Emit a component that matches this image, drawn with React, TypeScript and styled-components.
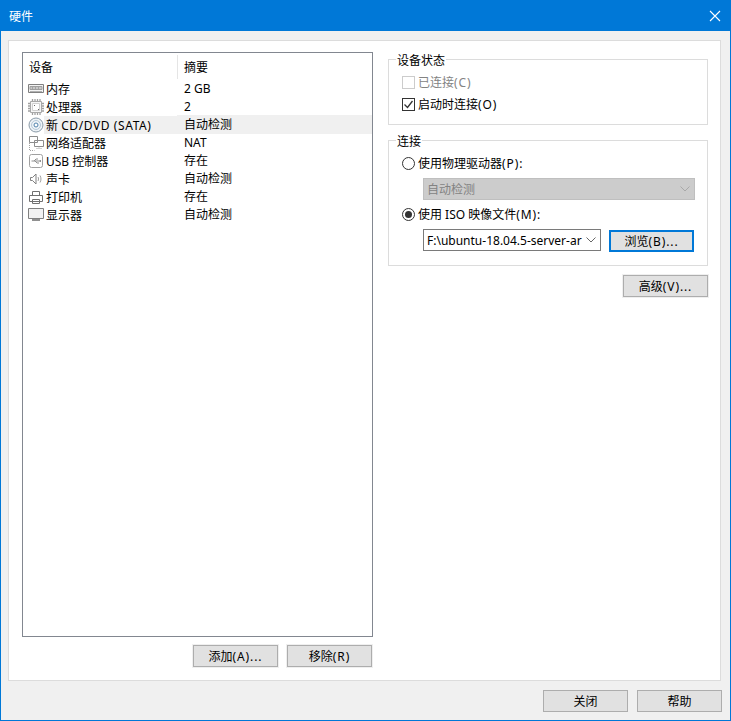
import React from "react";
import styled, { createGlobalStyle } from "styled-components";

const Global = createGlobalStyle`
  html, body { margin: 0; padding: 0; background: #f0f0f0; }
  * { box-sizing: border-box; }
  body { font-family: "Segoe UI", "Noto Sans", "Noto Sans CJK SC", sans-serif; font-size: 12px; color: #000; }
`;

const Win = styled.div`
  width: 731px; height: 721px; background: #f0f0f0;
  border: 1px solid #0078d7; border-top: 0;
  display: flex; flex-direction: column;
`;
const TitleBar = styled.div`
  height: 31px; margin: 0 -1px; background: #0078d7; color: #fff;
  display: flex; align-items: center; justify-content: space-between;
  padding: 0 10px 0 9px; font-size: 12px; flex: none;
`;
const Body = styled.div`
  flex: none; height: 641px; margin: 9px 9px 0 7px;
  background: #fff; border: 1px solid #dcdcdc;
  padding: 11px 12px 0 13px;
  display: grid; grid-template-columns: 351px 320px; column-gap: 15px;
`;
const LeftCol = styled.div`display: flex; flex-direction: column; gap: 8px;`;
const ListBox = styled.div`
  height: 585px; border: 1px solid #828790; background: #fff; padding: 1px 0 0 0;
`;
const Head = styled.div`
  display: grid; grid-template-columns: 154px 1fr; height: 25px; align-items: center;
`;
const HeadCell = styled.div<{ $sep?: boolean }>`
  height: 24px; line-height: 26px; padding-left: 6px;
  border-left: ${p => (p.$sep ? "1px solid #e5e5e5" : "0")};
`;
const Row = styled.div`
  display: grid; grid-template-columns: 154px 1fr; height: 18px; line-height: 18px;
`;
const NameCell = styled.div`display: flex; align-items: center; white-space: pre;`;
const IconBox = styled.span`
  width: 18px; height: 18px; margin-left: 4px; flex: none; display: flex; align-items: center; justify-content: center;
`;
const NameText = styled.span<{ $sel?: boolean }>`
  flex: 1; height: 18px; padding: 1px 0 0 2px; margin-left: -1px; background: ${p => (p.$sel ? "#f0f0f0" : "transparent")};
`;
const ValCell = styled.div<{ $sel?: boolean }>`
  padding: 1px 0 0 7px; background: ${p => (p.$sel ? "#f0f0f0" : "transparent")};
`;
const Wide = styled.span<{ $ls?: number }>`letter-spacing: ${p => p.$ls ?? 0.9}px;`;
const BtnRow = styled.div`display: flex; justify-content: flex-end; gap: 9px; padding-right: 1px;`;
const Btn = styled.button<{ $focus?: boolean; $lift?: boolean }>`
  width: 85px; height: 22px; padding: 0; margin: 0; font: inherit; color: #000;
  background: #e1e1e1; border-radius: 0;
  border: ${p => (p.$focus ? "2px solid #0078d7" : "1px solid #adadad")};
  box-shadow: ${p => (p.$lift ? "none" : "0 0 0 1px #efefef")};
`;
const RightCol = styled.div`display: flex; flex-direction: column;`;
const Group = styled.fieldset<{ $h: number; $top: number }>`
  margin: ${p => p.$top}px 0 0 0; padding: 4px 0 0 13px; height: ${p => p.$h}px; min-width: 0;
  border: 1px solid #dcdcdc; display: block;
`;
const Legend = styled.legend`
  margin-left: -6px; padding: 0 1px; height: 15px; line-height: 17px; font-size: 12px;
`;
const Opt = styled.div<{ $dis?: boolean }>`
  display: flex; align-items: center; gap: 3px; height: 22px; white-space: pre;
  color: ${p => (p.$dis ? "#838383" : "#000")};
`;
const CheckMark = styled.span<{ $dis?: boolean }>`
  width: 13px; height: 13px; flex: none; background: #fff; display: flex;
  border: 1px solid ${p => (p.$dis ? "#cccccc" : "#333333")};
`;
const Radio = styled.span<{ $on?: boolean }>`
  width: 13px; height: 13px; flex: none; border-radius: 50%; border: 1px solid #333; background: #fff;
  display: flex; align-items: center; justify-content: center;
  &::after { content: ""; width: 7px; height: 7px; border-radius: 50%; background: ${p => (p.$on ? "#333" : "transparent")}; }
`;
const Indent = styled.div`
  padding: 4px 0 3px 21px; display: flex; gap: 8px; align-items: flex-start;
`;
const Select = styled.div<{ $dis?: boolean; $w: number }>`
  width: ${p => p.$w}px; height: 22px; display: flex; align-items: center; justify-content: space-between;
  padding: 0 4px 0 3px; overflow: hidden; white-space: nowrap;
  background: ${p => (p.$dis ? "#cccccc" : "#fff")};
  border: 1px solid ${p => (p.$dis ? "#bfbfbf" : "#7a7a7a")};
  color: ${p => (p.$dis ? "#838383" : "#000")};
`;
const Chevron = ({ c }: { c: string }) => (
  <svg width="10" height="6" viewBox="0 0 10 6" style={{ flex: "none" }}>
    <path d="M0.5 0.5 L5 5 L9.5 0.5" fill="none" stroke={c} />
  </svg>
);
const BrowseWrap = styled.div`padding-top: 1px;`;
const AdvRow = styled.div`display: flex; justify-content: flex-end; margin-top: 9px;`;
const Footer = styled.div`
  flex: 1; display: flex; justify-content: flex-end; gap: 9px; padding: 9px 8px 0 0;
`;

const S = "#808080";
const Icon = ({ k }: { k: string }) => {
  const common = { width: 18, height: 18, viewBox: "0 0 18 18", fill: "none", stroke: S, strokeWidth: 1 } as const;
  switch (k) {
    case "mem":
      return (
        <svg {...common}>
          <path d="M1.500 4.500h15v8h-15z" fill="#f4f4f4" />
          <path d="M3 6.500h12v3H3z" fill="#c8c8c8" stroke="#a0a0a0" />
          <path d="M5 8h1M8 8h1M11 8h1" stroke="#808080" />
          <path d="M3 11.500h12" stroke="#b0b0b0" />
        </svg>
      );
    case "cpu":
      return (
        <svg {...common}>
          <path d="M3.500 3.500h11v11h-11z" stroke="#a8a8a8" fill="#f6f6f6" />
          <path d="M5.500 5.500h7v7h-7z" stroke="#d0d0d0" fill="#fff" />
          <path d="M1 5.500h2M1 8h2M1 10.500h2M1 13h2M15 5.500h2M15 8h2M15 10.500h2M15 13h2M5.500 1v2M8 1v2M10.500 1v2M13 1v2M5.500 15v2M8 15v2M10.500 15v2M13 15v2" stroke="#a0a0a0" strokeWidth="1.300" />
          <path d="M7 7h1v1H7zM11 11h1v1h-1z" fill="#666" stroke="none" />
        </svg>
      );
    case "cd":
      return (
        <svg {...common}>
          <circle cx="9" cy="9" r="7" stroke="#8a9aa8" fill="#eef3f7" />
          <circle cx="9" cy="9" r="4.500" stroke="#b5c9d9" />
          <circle cx="9" cy="9" r="2" stroke="#4d82ad" fill="#fff" />
        </svg>
      );
    case "net":
      return (
        <svg {...common}>
          <path d="M2.500 2.500h8v6h-8zM7.500 6.500h9v6h-9z" fill="#fff" stroke="#8c8c8c" />
          <path d="M12 12.500v2M9.500 14.500h5M2.500 9v7.500h5" stroke="#a0a0a0" strokeDasharray="1 1" />
        </svg>
      );
    case "usb":
      return (
        <svg {...common}>
          <rect x="2.500" y="2.500" width="13" height="13" rx="2" stroke="#a0a0a0" />
          <path d="M4.500 9h8M7 9l2-2h2M8 9l2 2h2" stroke="#909090" />
          <path d="M12.500 8h1.500v2h-1.500z" fill="#909090" stroke="none" />
        </svg>
      );
    case "snd":
      return (
        <svg {...common}>
          <path d="M3.500 7.500h2l3.500-3.500v10l-3.500-3.500h-2z" />
          <path d="M11 7c.700 1.300.700 2.700 0 4M13 5.500c1.300 2.300 1.300 4.700 0 7" stroke="#a0a0a0" />
        </svg>
      );
    case "prn":
      return (
        <svg {...common}>
          <path d="M5.500 7.500v-4h7v4M2.500 7.500h13v6h-13zM5.500 11.500h7v4h-7z" fill="#fff" stroke="#707070" />
        </svg>
      );
    default:
      return (
        <svg {...common}>
          <path d="M1.500 2.500h15v10h-15z" stroke="#808080" fill="#f2f2f2" />
          <path d="M5 14h8" stroke="#909090" strokeWidth="2" />
        </svg>
      );
  }
};

const rows: { k: string; n: React.ReactNode; v: string; sel?: boolean }[] = [
  { k: "mem", n: "内存", v: "2 GB" },
  { k: "cpu", n: "处理器", v: "2" },
  { k: "cd", n: <>新 <Wide $ls={0.6}>CD/DVD (SATA)</Wide></>, v: "自动检测", sel: true },
  { k: "net", n: "网络适配器", v: "NAT" },
  { k: "usb", n: "USB 控制器", v: "存在" },
  { k: "snd", n: "声卡", v: "自动检测" },
  { k: "prn", n: "打印机", v: "存在" },
  { k: "mon", n: "显示器", v: "自动检测" },
];

export default function App() {
  return (
    <>
      <Global />
      <Win>
        <TitleBar>
          <span>硬件</span>
          <svg width="12" height="12" viewBox="0 0 12 12">
            <path d="M1 1 L11 11 M11 1 L1 11" stroke="#fff" strokeWidth="1.100" />
          </svg>
        </TitleBar>
        <Body>
          <LeftCol>
            <ListBox>
              <Head>
                <HeadCell>设备</HeadCell>
                <HeadCell $sep>摘要</HeadCell>
              </Head>
              {rows.map(r => (
                <Row key={r.k}>
                  <NameCell>
                    <IconBox><Icon k={r.k} /></IconBox>
                    <NameText $sel={r.sel}>{r.n}</NameText>
                  </NameCell>
                  <ValCell $sel={r.sel}>{r.v}</ValCell>
                </Row>
              ))}
            </ListBox>
            <BtnRow>
              <Btn>添加<Wide>(A)...</Wide></Btn>
              <Btn>移除<Wide>(R)</Wide></Btn>
            </BtnRow>
          </LeftCol>
          <RightCol>
            <Group $h={73} $top={0}>
              <Legend>设备状态</Legend>
              <Opt $dis><CheckMark $dis /><span>已连接<Wide>(C)</Wide></span></Opt>
              <Opt>
                <CheckMark>
                  <svg width="11" height="11" viewBox="0 0 11 11"><path d="M1.500 5.500 L4.500 8.500 L9.500 2" fill="none" stroke="#333" strokeWidth="1.300" /></svg>
                </CheckMark>
                <span>启动时连接<Wide>(O)</Wide></span>
              </Opt>
            </Group>
            <Group $h={133} $top={8}>
              <Legend>连接</Legend>
              <Opt><Radio /><span>使用物理驱动器<Wide>(P):</Wide></span></Opt>
              <Indent>
                <Select $dis $w={272}>自动检测<Chevron c="#a8a8a8" /></Select>
              </Indent>
              <Opt><Radio $on /><span>使用 ISO 映像文件<Wide>(M):</Wide></span></Opt>
              <Indent>
                <Select $w={178}>F:\ubuntu-18.04.5-server-ar<Chevron c="#666" /></Select>
                <BrowseWrap><Btn $focus $lift>浏览<Wide>(B)...</Wide></Btn></BrowseWrap>
              </Indent>
            </Group>
            <AdvRow><Btn>高级<Wide>(V)...</Wide></Btn></AdvRow>
          </RightCol>
        </Body>
        <Footer>
          <Btn $lift>关闭</Btn>
          <Btn $lift>帮助</Btn>
        </Footer>
      </Win>
    </>
  );
}
